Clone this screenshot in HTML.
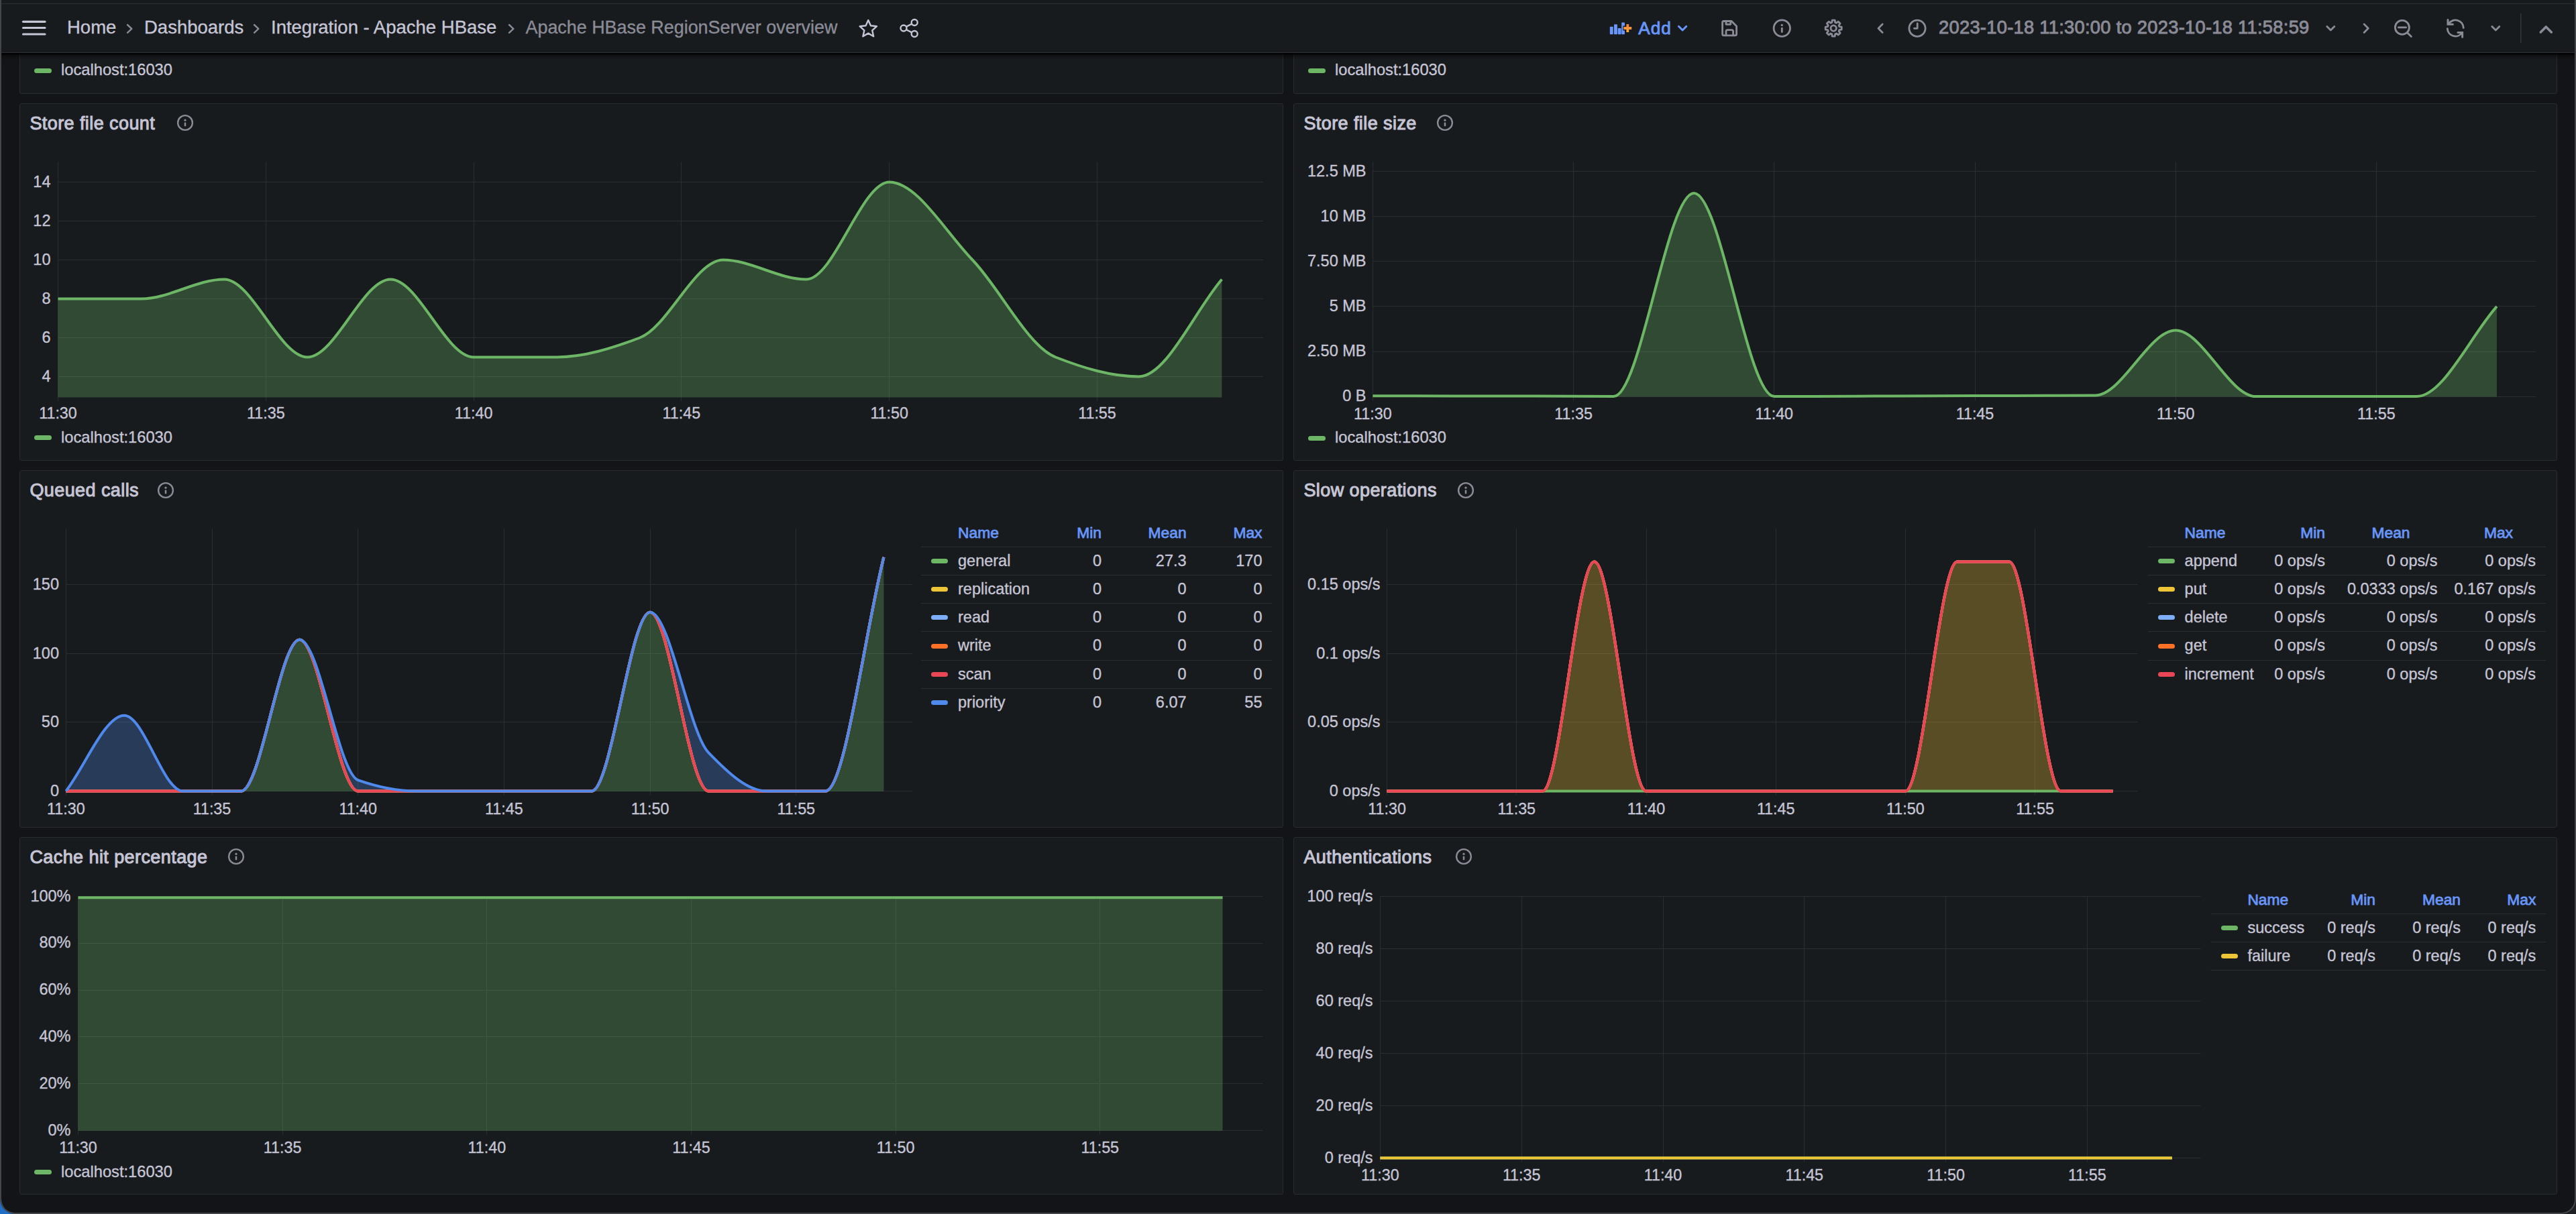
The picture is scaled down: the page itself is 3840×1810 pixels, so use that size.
<!DOCTYPE html><html><head><meta charset="utf-8"><style>
html,body{margin:0;padding:0;width:3840px;height:1810px;overflow:hidden;background:#1f2023;font-family:"Liberation Sans", sans-serif}
.a{position:absolute}
.t{position:absolute;white-space:pre;-webkit-text-stroke-width:0.35px}
.p{position:absolute;background:#181b1e;border:1px solid #292b30;border-radius:3px}
</style></head><body>
<div class="a" style="left:0;top:1770px;width:40px;height:40px;background:#1f6fc9"></div>
<div class="a" style="left:2px;top:0;width:3836px;height:1808px;background:#131417;border-radius:0 0 20px 20px;overflow:hidden" id="win">
</div>
<div class="a" style="left:0;top:0;width:3840px;height:1810px;box-sizing:border-box;border:2px solid #444548;border-top:none;border-radius:0 0 22px 22px;pointer-events:none"></div>
<div class="p" style="left:29px;top:-393px;width:1882px;height:531px"></div>
<div class="p" style="left:1928px;top:-393px;width:1882px;height:531px"></div>
<div class="p" style="left:29px;top:154px;width:1882px;height:531px"></div>
<div class="p" style="left:1928px;top:154px;width:1882px;height:531px"></div>
<div class="p" style="left:29px;top:701px;width:1882px;height:531px"></div>
<div class="p" style="left:1928px;top:701px;width:1882px;height:531px"></div>
<div class="p" style="left:29px;top:1248px;width:1882px;height:531px"></div>
<div class="p" style="left:1928px;top:1248px;width:1882px;height:531px"></div>
<div class="a" style="left:51px;top:102.3px;width:26px;height:7px;border-radius:3.5px;background:#6cb666"></div>
<div class="t" style="left:91.0px;top:93.4px;font-size:23.7px;line-height:23.7px;color:#c6c5d5;font-weight:400;">localhost:16030</div>
<div class="a" style="left:1950px;top:102.3px;width:26px;height:7px;border-radius:3.5px;background:#6cb666"></div>
<div class="t" style="left:1990.0px;top:93.4px;font-size:23.7px;line-height:23.7px;color:#c6c5d5;font-weight:400;">localhost:16030</div>
<div class="t" style="left:44.4px;top:171.0px;font-size:27px;line-height:27px;color:#c6c5d5;font-weight:400;letter-spacing:0.42px;-webkit-text-stroke:1px #c6c5d5">Store file count</div>
<svg class="a" style="left:260.5px;top:168px" width="30" height="30" viewBox="0 0 30 30"><circle cx="15" cy="15" r="10.9" fill="none" stroke="#8b8b97" stroke-width="2.4"/><circle cx="15" cy="11.2" r="1.6" fill="#8b8b97"/><rect x="13.75" y="14.4" width="2.5" height="5.8" rx="0.6" fill="#8b8b97"/></svg>
<svg class="a" style="left:0;top:0" width="3840" height="1810"><line x1="86.5" y1="271.5" x2="1883" y2="271.5" stroke="#2b2e31" stroke-width="1"/><line x1="86.5" y1="329.5" x2="1883" y2="329.5" stroke="#2b2e31" stroke-width="1"/><line x1="86.5" y1="387.5" x2="1883" y2="387.5" stroke="#2b2e31" stroke-width="1"/><line x1="86.5" y1="445.5" x2="1883" y2="445.5" stroke="#2b2e31" stroke-width="1"/><line x1="86.5" y1="503.5" x2="1883" y2="503.5" stroke="#2b2e31" stroke-width="1"/><line x1="86.5" y1="561.5" x2="1883" y2="561.5" stroke="#2b2e31" stroke-width="1"/><line x1="86.5" y1="241.5" x2="86.5" y2="598.4" stroke="#2b2e31" stroke-width="1"/><line x1="396.5" y1="241.5" x2="396.5" y2="598.4" stroke="#2b2e31" stroke-width="1"/><line x1="706.5" y1="241.5" x2="706.5" y2="598.4" stroke="#2b2e31" stroke-width="1"/><line x1="1015.5" y1="241.5" x2="1015.5" y2="598.4" stroke="#2b2e31" stroke-width="1"/><line x1="1325.5" y1="241.5" x2="1325.5" y2="598.4" stroke="#2b2e31" stroke-width="1"/><line x1="1635.5" y1="241.5" x2="1635.5" y2="598.4" stroke="#2b2e31" stroke-width="1"/><path d="M86.50,445.50C127.81,445.50 169.11,445.50 210.42,445.50C251.73,445.50 293.03,416.50 334.34,416.50C375.65,416.50 416.95,532.50 458.26,532.50C499.57,532.50 540.87,416.50 582.18,416.50C623.49,416.50 664.79,532.50 706.10,532.50C747.41,532.50 788.71,532.50 830.02,532.50C871.33,532.50 912.63,518.97 953.94,503.50C995.25,488.03 1036.55,387.50 1077.86,387.50C1119.17,387.50 1160.47,416.50 1201.78,416.50C1243.09,416.50 1284.39,271.50 1325.70,271.50C1367.01,271.50 1408.31,344.54 1449.62,387.50C1490.93,430.46 1532.23,516.39 1573.54,532.50C1614.85,548.61 1656.15,561.50 1697.46,561.50C1738.77,561.50 1780.07,464.83 1821.38,416.50L1821.38,592.40L86.50,592.40Z" fill="rgba(108,182,102,0.31)" stroke="none"/><path d="M86.50,445.50C127.81,445.50 169.11,445.50 210.42,445.50C251.73,445.50 293.03,416.50 334.34,416.50C375.65,416.50 416.95,532.50 458.26,532.50C499.57,532.50 540.87,416.50 582.18,416.50C623.49,416.50 664.79,532.50 706.10,532.50C747.41,532.50 788.71,532.50 830.02,532.50C871.33,532.50 912.63,518.97 953.94,503.50C995.25,488.03 1036.55,387.50 1077.86,387.50C1119.17,387.50 1160.47,416.50 1201.78,416.50C1243.09,416.50 1284.39,271.50 1325.70,271.50C1367.01,271.50 1408.31,344.54 1449.62,387.50C1490.93,430.46 1532.23,516.39 1573.54,532.50C1614.85,548.61 1656.15,561.50 1697.46,561.50C1738.77,561.50 1780.07,464.83 1821.38,416.50" fill="none" stroke="#6cb666" stroke-width="4" stroke-linejoin="round" stroke-linecap="butt"/></svg>
<div class="t" style="left:-1424.5px;width:1500px;text-align:right;top:259.7px;font-size:23.5px;line-height:23.5px;color:#c6c5d5;font-weight:400;">14</div>
<div class="t" style="left:-1424.5px;width:1500px;text-align:right;top:317.7px;font-size:23.5px;line-height:23.5px;color:#c6c5d5;font-weight:400;">12</div>
<div class="t" style="left:-1424.5px;width:1500px;text-align:right;top:375.7px;font-size:23.5px;line-height:23.5px;color:#c6c5d5;font-weight:400;">10</div>
<div class="t" style="left:-1424.5px;width:1500px;text-align:right;top:433.7px;font-size:23.5px;line-height:23.5px;color:#c6c5d5;font-weight:400;">8</div>
<div class="t" style="left:-1424.5px;width:1500px;text-align:right;top:491.7px;font-size:23.5px;line-height:23.5px;color:#c6c5d5;font-weight:400;">6</div>
<div class="t" style="left:-1424.5px;width:1500px;text-align:right;top:549.7px;font-size:23.5px;line-height:23.5px;color:#c6c5d5;font-weight:400;">4</div>
<div class="t" style="left:-663.5px;width:1500px;text-align:center;top:605.4px;font-size:23.3px;line-height:23.3px;color:#c6c5d5;font-weight:400;">11:30</div>
<div class="t" style="left:-353.7px;width:1500px;text-align:center;top:605.4px;font-size:23.3px;line-height:23.3px;color:#c6c5d5;font-weight:400;">11:35</div>
<div class="t" style="left:-43.9px;width:1500px;text-align:center;top:605.4px;font-size:23.3px;line-height:23.3px;color:#c6c5d5;font-weight:400;">11:40</div>
<div class="t" style="left:265.9px;width:1500px;text-align:center;top:605.4px;font-size:23.3px;line-height:23.3px;color:#c6c5d5;font-weight:400;">11:45</div>
<div class="t" style="left:575.7px;width:1500px;text-align:center;top:605.4px;font-size:23.3px;line-height:23.3px;color:#c6c5d5;font-weight:400;">11:50</div>
<div class="t" style="left:885.5px;width:1500px;text-align:center;top:605.4px;font-size:23.3px;line-height:23.3px;color:#c6c5d5;font-weight:400;">11:55</div>
<div class="a" style="left:51px;top:649.4px;width:26px;height:7px;border-radius:3.5px;background:#6cb666"></div>
<div class="t" style="left:91.0px;top:640.9px;font-size:23.7px;line-height:23.7px;color:#c6c5d5;font-weight:400;">localhost:16030</div>
<div class="t" style="left:1943.4px;top:171.0px;font-size:27px;line-height:27px;color:#c6c5d5;font-weight:400;letter-spacing:0.42px;-webkit-text-stroke:1px #c6c5d5">Store file size</div>
<svg class="a" style="left:2138.5px;top:168.4px" width="30" height="30" viewBox="0 0 30 30"><circle cx="15" cy="15" r="10.9" fill="none" stroke="#8b8b97" stroke-width="2.4"/><circle cx="15" cy="11.2" r="1.6" fill="#8b8b97"/><rect x="13.75" y="14.4" width="2.5" height="5.8" rx="0.6" fill="#8b8b97"/></svg>
<svg class="a" style="left:0;top:0" width="3840" height="1810"><line x1="2046.4" y1="255.5" x2="3780.5" y2="255.5" stroke="#2b2e31" stroke-width="1"/><line x1="2046.4" y1="322.5" x2="3780.5" y2="322.5" stroke="#2b2e31" stroke-width="1"/><line x1="2046.4" y1="389.5" x2="3780.5" y2="389.5" stroke="#2b2e31" stroke-width="1"/><line x1="2046.4" y1="456.5" x2="3780.5" y2="456.5" stroke="#2b2e31" stroke-width="1"/><line x1="2046.4" y1="524.5" x2="3780.5" y2="524.5" stroke="#2b2e31" stroke-width="1"/><line x1="2046.4" y1="591.5" x2="3780.5" y2="591.5" stroke="#2b2e31" stroke-width="1"/><line x1="2046.5" y1="241.5" x2="2046.5" y2="597.5" stroke="#2b2e31" stroke-width="1"/><line x1="2345.5" y1="241.5" x2="2345.5" y2="597.5" stroke="#2b2e31" stroke-width="1"/><line x1="2644.5" y1="241.5" x2="2644.5" y2="597.5" stroke="#2b2e31" stroke-width="1"/><line x1="2944.5" y1="241.5" x2="2944.5" y2="597.5" stroke="#2b2e31" stroke-width="1"/><line x1="3243.5" y1="241.5" x2="3243.5" y2="597.5" stroke="#2b2e31" stroke-width="1"/><line x1="3542.5" y1="241.5" x2="3542.5" y2="597.5" stroke="#2b2e31" stroke-width="1"/><path d="M2046.40,590.29C2086.29,590.32 2126.19,590.34 2166.08,590.38C2205.97,590.41 2245.87,590.47 2285.76,590.56C2325.65,590.66 2365.55,591.10 2405.44,591.10C2445.33,591.10 2485.23,288.08 2525.12,288.08C2565.01,288.08 2604.91,591.10 2644.80,591.10C2684.69,591.10 2724.59,590.83 2764.48,590.70C2804.37,590.56 2844.27,590.43 2884.16,590.29C2924.05,590.16 2963.95,590.03 3003.84,589.89C3043.73,589.76 3083.63,589.76 3123.52,589.49C3163.41,589.22 3203.31,492.60 3243.20,492.60C3283.09,492.60 3322.99,591.10 3362.88,591.10C3402.77,591.10 3442.67,591.10 3482.56,591.10C3522.45,591.10 3562.35,591.10 3602.24,591.10C3642.13,591.10 3682.03,501.63 3721.92,456.90L3721.92,591.50L2046.40,591.50Z" fill="rgba(108,182,102,0.31)" stroke="none"/><path d="M2046.40,590.29C2086.29,590.32 2126.19,590.34 2166.08,590.38C2205.97,590.41 2245.87,590.47 2285.76,590.56C2325.65,590.66 2365.55,591.10 2405.44,591.10C2445.33,591.10 2485.23,288.08 2525.12,288.08C2565.01,288.08 2604.91,591.10 2644.80,591.10C2684.69,591.10 2724.59,590.83 2764.48,590.70C2804.37,590.56 2844.27,590.43 2884.16,590.29C2924.05,590.16 2963.95,590.03 3003.84,589.89C3043.73,589.76 3083.63,589.76 3123.52,589.49C3163.41,589.22 3203.31,492.60 3243.20,492.60C3283.09,492.60 3322.99,591.10 3362.88,591.10C3402.77,591.10 3442.67,591.10 3482.56,591.10C3522.45,591.10 3562.35,591.10 3602.24,591.10C3642.13,591.10 3682.03,501.63 3721.92,456.90" fill="none" stroke="#6cb666" stroke-width="4" stroke-linejoin="round" stroke-linecap="butt"/></svg>
<div class="t" style="left:536.5px;width:1500px;text-align:right;top:243.8px;font-size:23.5px;line-height:23.5px;color:#c6c5d5;font-weight:400;">12.5 MB</div>
<div class="t" style="left:536.5px;width:1500px;text-align:right;top:310.9px;font-size:23.5px;line-height:23.5px;color:#c6c5d5;font-weight:400;">10 MB</div>
<div class="t" style="left:536.5px;width:1500px;text-align:right;top:378.0px;font-size:23.5px;line-height:23.5px;color:#c6c5d5;font-weight:400;">7.50 MB</div>
<div class="t" style="left:536.5px;width:1500px;text-align:right;top:445.1px;font-size:23.5px;line-height:23.5px;color:#c6c5d5;font-weight:400;">5 MB</div>
<div class="t" style="left:536.5px;width:1500px;text-align:right;top:512.2px;font-size:23.5px;line-height:23.5px;color:#c6c5d5;font-weight:400;">2.50 MB</div>
<div class="t" style="left:536.5px;width:1500px;text-align:right;top:579.3px;font-size:23.5px;line-height:23.5px;color:#c6c5d5;font-weight:400;">0 B</div>
<div class="t" style="left:1296.4px;width:1500px;text-align:center;top:606.0px;font-size:23.3px;line-height:23.3px;color:#c6c5d5;font-weight:400;">11:30</div>
<div class="t" style="left:1595.6px;width:1500px;text-align:center;top:606.0px;font-size:23.3px;line-height:23.3px;color:#c6c5d5;font-weight:400;">11:35</div>
<div class="t" style="left:1894.8px;width:1500px;text-align:center;top:606.0px;font-size:23.3px;line-height:23.3px;color:#c6c5d5;font-weight:400;">11:40</div>
<div class="t" style="left:2194.0px;width:1500px;text-align:center;top:606.0px;font-size:23.3px;line-height:23.3px;color:#c6c5d5;font-weight:400;">11:45</div>
<div class="t" style="left:2493.2px;width:1500px;text-align:center;top:606.0px;font-size:23.3px;line-height:23.3px;color:#c6c5d5;font-weight:400;">11:50</div>
<div class="t" style="left:2792.4px;width:1500px;text-align:center;top:606.0px;font-size:23.3px;line-height:23.3px;color:#c6c5d5;font-weight:400;">11:55</div>
<div class="a" style="left:1950px;top:649.5px;width:26px;height:7px;border-radius:3.5px;background:#6cb666"></div>
<div class="t" style="left:1990.0px;top:640.9px;font-size:23.7px;line-height:23.7px;color:#c6c5d5;font-weight:400;">localhost:16030</div>
<div class="t" style="left:44.4px;top:717.9px;font-size:27px;line-height:27px;color:#c6c5d5;font-weight:400;letter-spacing:0.42px;-webkit-text-stroke:1px #c6c5d5">Queued calls</div>
<svg class="a" style="left:231.5px;top:715.6px" width="30" height="30" viewBox="0 0 30 30"><circle cx="15" cy="15" r="10.9" fill="none" stroke="#8b8b97" stroke-width="2.4"/><circle cx="15" cy="11.2" r="1.6" fill="#8b8b97"/><rect x="13.75" y="14.4" width="2.5" height="5.8" rx="0.6" fill="#8b8b97"/></svg>
<svg class="a" style="left:0;top:0" width="3840" height="1810"><line x1="98.3" y1="871.5" x2="1359.6" y2="871.5" stroke="#2b2e31" stroke-width="1"/><line x1="98.3" y1="974.5" x2="1359.6" y2="974.5" stroke="#2b2e31" stroke-width="1"/><line x1="98.3" y1="1076.5" x2="1359.6" y2="1076.5" stroke="#2b2e31" stroke-width="1"/><line x1="98.3" y1="1179.5" x2="1359.6" y2="1179.5" stroke="#2b2e31" stroke-width="1"/><line x1="98.5" y1="788.3" x2="98.5" y2="1185.8" stroke="#2b2e31" stroke-width="1"/><line x1="316.5" y1="788.3" x2="316.5" y2="1185.8" stroke="#2b2e31" stroke-width="1"/><line x1="533.5" y1="788.3" x2="533.5" y2="1185.8" stroke="#2b2e31" stroke-width="1"/><line x1="751.5" y1="788.3" x2="751.5" y2="1185.8" stroke="#2b2e31" stroke-width="1"/><line x1="969.5" y1="788.3" x2="969.5" y2="1185.8" stroke="#2b2e31" stroke-width="1"/><line x1="1186.5" y1="788.3" x2="1186.5" y2="1185.8" stroke="#2b2e31" stroke-width="1"/><path d="M98.30,1179.50C127.33,1179.50 156.35,1179.50 185.38,1179.50C214.41,1179.50 243.43,1179.50 272.46,1179.50C301.49,1179.50 330.51,1179.50 359.54,1179.50C388.57,1179.50 417.59,953.78 446.62,953.78C475.65,953.78 504.67,1179.50 533.70,1179.50C562.73,1179.50 591.75,1179.50 620.78,1179.50C649.81,1179.50 678.83,1179.50 707.86,1179.50C736.89,1179.50 765.91,1179.50 794.94,1179.50C823.97,1179.50 852.99,1179.50 882.02,1179.50C911.05,1179.50 940.07,912.74 969.10,912.74C998.13,912.74 1027.15,1179.50 1056.18,1179.50C1085.21,1179.50 1114.23,1179.50 1143.26,1179.50C1172.29,1179.50 1201.31,1179.50 1230.34,1179.50C1259.37,1179.50 1288.39,946.94 1317.42,830.66L1317.42,1179.80L98.30,1179.80Z" fill="rgba(108,182,102,0.31)" stroke="none"/><path d="M98.30,1179.50C127.33,1141.88 156.35,1066.64 185.38,1066.64C214.41,1066.64 243.43,1179.50 272.46,1179.50C301.49,1179.50 330.51,1179.50 359.54,1179.50C388.57,1179.50 417.59,953.78 446.62,953.78C475.65,953.78 504.67,1152.94 533.70,1163.08C562.73,1173.23 591.75,1179.50 620.78,1179.50C649.81,1179.50 678.83,1179.50 707.86,1179.50C736.89,1179.50 765.91,1179.50 794.94,1179.50C823.97,1179.50 852.99,1179.50 882.02,1179.50C911.05,1179.50 940.07,912.74 969.10,912.74C998.13,912.74 1027.15,1091.99 1056.18,1122.04C1085.21,1152.10 1114.23,1179.50 1143.26,1179.50C1172.29,1179.50 1201.31,1179.50 1230.34,1179.50C1259.37,1179.50 1288.39,946.94 1317.42,830.66L1317.42,830.66C1288.39,946.94 1259.37,1179.50 1230.34,1179.50C1201.31,1179.50 1172.29,1179.50 1143.26,1179.50C1114.23,1179.50 1085.21,1179.50 1056.18,1179.50C1027.15,1179.50 998.13,912.74 969.10,912.74C940.07,912.74 911.05,1179.50 882.02,1179.50C852.99,1179.50 823.97,1179.50 794.94,1179.50C765.91,1179.50 736.89,1179.50 707.86,1179.50C678.83,1179.50 649.81,1179.50 620.78,1179.50C591.75,1179.50 562.73,1179.50 533.70,1179.50C504.67,1179.50 475.65,953.78 446.62,953.78C417.59,953.78 388.57,1179.50 359.54,1179.50C330.51,1179.50 301.49,1179.50 272.46,1179.50C243.43,1179.50 214.41,1179.50 185.38,1179.50C156.35,1179.50 127.33,1179.50 98.30,1179.50Z" fill="rgba(79,137,236,0.29)" stroke="none"/><path d="M98.30,1179.50C127.33,1179.50 156.35,1179.50 185.38,1179.50C214.41,1179.50 243.43,1179.50 272.46,1179.50C301.49,1179.50 330.51,1179.50 359.54,1179.50C388.57,1179.50 417.59,953.78 446.62,953.78C475.65,953.78 504.67,1179.50 533.70,1179.50C562.73,1179.50 591.75,1179.50 620.78,1179.50C649.81,1179.50 678.83,1179.50 707.86,1179.50C736.89,1179.50 765.91,1179.50 794.94,1179.50C823.97,1179.50 852.99,1179.50 882.02,1179.50C911.05,1179.50 940.07,912.74 969.10,912.74C998.13,912.74 1027.15,1179.50 1056.18,1179.50C1085.21,1179.50 1114.23,1179.50 1143.26,1179.50C1172.29,1179.50 1201.31,1179.50 1230.34,1179.50C1259.37,1179.50 1288.39,946.94 1317.42,830.66" fill="none" stroke="#6cb666" stroke-width="4" stroke-linejoin="round" stroke-linecap="butt"/><path d="M98.30,1179.50C127.33,1179.50 156.35,1179.50 185.38,1179.50C214.41,1179.50 243.43,1179.50 272.46,1179.50C301.49,1179.50 330.51,1179.50 359.54,1179.50C388.57,1179.50 417.59,953.78 446.62,953.78C475.65,953.78 504.67,1179.50 533.70,1179.50C562.73,1179.50 591.75,1179.50 620.78,1179.50C649.81,1179.50 678.83,1179.50 707.86,1179.50C736.89,1179.50 765.91,1179.50 794.94,1179.50C823.97,1179.50 852.99,1179.50 882.02,1179.50C911.05,1179.50 940.07,912.74 969.10,912.74C998.13,912.74 1027.15,1179.50 1056.18,1179.50C1085.21,1179.50 1114.23,1179.50 1143.26,1179.50C1172.29,1179.50 1201.31,1179.50 1230.34,1179.50C1259.37,1179.50 1288.39,946.94 1317.42,830.66" fill="none" stroke="#eec536" stroke-width="4" stroke-linejoin="round" stroke-linecap="butt"/><path d="M98.30,1179.50C127.33,1179.50 156.35,1179.50 185.38,1179.50C214.41,1179.50 243.43,1179.50 272.46,1179.50C301.49,1179.50 330.51,1179.50 359.54,1179.50C388.57,1179.50 417.59,953.78 446.62,953.78C475.65,953.78 504.67,1179.50 533.70,1179.50C562.73,1179.50 591.75,1179.50 620.78,1179.50C649.81,1179.50 678.83,1179.50 707.86,1179.50C736.89,1179.50 765.91,1179.50 794.94,1179.50C823.97,1179.50 852.99,1179.50 882.02,1179.50C911.05,1179.50 940.07,912.74 969.10,912.74C998.13,912.74 1027.15,1179.50 1056.18,1179.50C1085.21,1179.50 1114.23,1179.50 1143.26,1179.50C1172.29,1179.50 1201.31,1179.50 1230.34,1179.50C1259.37,1179.50 1288.39,946.94 1317.42,830.66" fill="none" stroke="#7faef8" stroke-width="4" stroke-linejoin="round" stroke-linecap="butt"/><path d="M98.30,1179.50C127.33,1179.50 156.35,1179.50 185.38,1179.50C214.41,1179.50 243.43,1179.50 272.46,1179.50C301.49,1179.50 330.51,1179.50 359.54,1179.50C388.57,1179.50 417.59,953.78 446.62,953.78C475.65,953.78 504.67,1179.50 533.70,1179.50C562.73,1179.50 591.75,1179.50 620.78,1179.50C649.81,1179.50 678.83,1179.50 707.86,1179.50C736.89,1179.50 765.91,1179.50 794.94,1179.50C823.97,1179.50 852.99,1179.50 882.02,1179.50C911.05,1179.50 940.07,912.74 969.10,912.74C998.13,912.74 1027.15,1179.50 1056.18,1179.50C1085.21,1179.50 1114.23,1179.50 1143.26,1179.50C1172.29,1179.50 1201.31,1179.50 1230.34,1179.50C1259.37,1179.50 1288.39,946.94 1317.42,830.66" fill="none" stroke="#ff7127" stroke-width="4" stroke-linejoin="round" stroke-linecap="butt"/><path d="M98.30,1179.50C127.33,1179.50 156.35,1179.50 185.38,1179.50C214.41,1179.50 243.43,1179.50 272.46,1179.50C301.49,1179.50 330.51,1179.50 359.54,1179.50C388.57,1179.50 417.59,953.78 446.62,953.78C475.65,953.78 504.67,1179.50 533.70,1179.50C562.73,1179.50 591.75,1179.50 620.78,1179.50C649.81,1179.50 678.83,1179.50 707.86,1179.50C736.89,1179.50 765.91,1179.50 794.94,1179.50C823.97,1179.50 852.99,1179.50 882.02,1179.50C911.05,1179.50 940.07,912.74 969.10,912.74C998.13,912.74 1027.15,1179.50 1056.18,1179.50C1085.21,1179.50 1114.23,1179.50 1143.26,1179.50C1172.29,1179.50 1201.31,1179.50 1230.34,1179.50C1259.37,1179.50 1288.39,946.94 1317.42,830.66" fill="none" stroke="#ea4655" stroke-width="4" stroke-linejoin="round" stroke-linecap="butt"/><path d="M98.30,1179.50C127.33,1141.88 156.35,1066.64 185.38,1066.64C214.41,1066.64 243.43,1179.50 272.46,1179.50C301.49,1179.50 330.51,1179.50 359.54,1179.50C388.57,1179.50 417.59,953.78 446.62,953.78C475.65,953.78 504.67,1152.94 533.70,1163.08C562.73,1173.23 591.75,1179.50 620.78,1179.50C649.81,1179.50 678.83,1179.50 707.86,1179.50C736.89,1179.50 765.91,1179.50 794.94,1179.50C823.97,1179.50 852.99,1179.50 882.02,1179.50C911.05,1179.50 940.07,912.74 969.10,912.74C998.13,912.74 1027.15,1091.99 1056.18,1122.04C1085.21,1152.10 1114.23,1179.50 1143.26,1179.50C1172.29,1179.50 1201.31,1179.50 1230.34,1179.50C1259.37,1179.50 1288.39,946.94 1317.42,830.66" fill="none" stroke="#4f89ec" stroke-width="4" stroke-linejoin="round" stroke-linecap="butt"/></svg>
<div class="t" style="left:-1412.0px;width:1500px;text-align:right;top:859.9px;font-size:23.5px;line-height:23.5px;color:#c6c5d5;font-weight:400;">150</div>
<div class="t" style="left:-1412.0px;width:1500px;text-align:right;top:962.5px;font-size:23.5px;line-height:23.5px;color:#c6c5d5;font-weight:400;">100</div>
<div class="t" style="left:-1412.0px;width:1500px;text-align:right;top:1065.1px;font-size:23.5px;line-height:23.5px;color:#c6c5d5;font-weight:400;">50</div>
<div class="t" style="left:-1412.0px;width:1500px;text-align:right;top:1167.7px;font-size:23.5px;line-height:23.5px;color:#c6c5d5;font-weight:400;">0</div>
<div class="t" style="left:-651.7px;width:1500px;text-align:center;top:1194.5px;font-size:23.3px;line-height:23.3px;color:#c6c5d5;font-weight:400;">11:30</div>
<div class="t" style="left:-434.0px;width:1500px;text-align:center;top:1194.5px;font-size:23.3px;line-height:23.3px;color:#c6c5d5;font-weight:400;">11:35</div>
<div class="t" style="left:-216.3px;width:1500px;text-align:center;top:1194.5px;font-size:23.3px;line-height:23.3px;color:#c6c5d5;font-weight:400;">11:40</div>
<div class="t" style="left:1.4px;width:1500px;text-align:center;top:1194.5px;font-size:23.3px;line-height:23.3px;color:#c6c5d5;font-weight:400;">11:45</div>
<div class="t" style="left:219.1px;width:1500px;text-align:center;top:1194.5px;font-size:23.3px;line-height:23.3px;color:#c6c5d5;font-weight:400;">11:50</div>
<div class="t" style="left:436.8px;width:1500px;text-align:center;top:1194.5px;font-size:23.3px;line-height:23.3px;color:#c6c5d5;font-weight:400;">11:55</div>
<div class="t" style="left:1428.0px;top:783.4px;font-size:22.8px;line-height:22.8px;color:#6896fa;font-weight:400;-webkit-text-stroke:0.8px #6896fa">Name</div>
<div class="t" style="left:142.0px;width:1500px;text-align:right;top:783.4px;font-size:22.8px;line-height:22.8px;color:#6896fa;font-weight:400;-webkit-text-stroke:0.8px #6896fa">Min</div>
<div class="t" style="left:268.6px;width:1500px;text-align:right;top:783.4px;font-size:22.8px;line-height:22.8px;color:#6896fa;font-weight:400;-webkit-text-stroke:0.8px #6896fa">Mean</div>
<div class="t" style="left:381.5px;width:1500px;text-align:right;top:783.4px;font-size:22.8px;line-height:22.8px;color:#6896fa;font-weight:400;-webkit-text-stroke:0.8px #6896fa">Max</div>
<svg class="a" style="left:0;top:0" width="3840" height="1810"><line x1="1373" y1="815.5" x2="1896" y2="815.5" stroke="#2b2e31" stroke-width="1"/><line x1="1373" y1="857.5" x2="1896" y2="857.5" stroke="#2b2e31" stroke-width="1"/><line x1="1373" y1="899.5" x2="1896" y2="899.5" stroke="#2b2e31" stroke-width="1"/><line x1="1373" y1="941.5" x2="1896" y2="941.5" stroke="#2b2e31" stroke-width="1"/><line x1="1373" y1="984.5" x2="1896" y2="984.5" stroke="#2b2e31" stroke-width="1"/><line x1="1373" y1="1026.5" x2="1896" y2="1026.5" stroke="#2b2e31" stroke-width="1"/></svg>
<div class="a" style="left:1388px;top:833.0px;width:25px;height:7px;border-radius:3.5px;background:#6cb666"></div>
<div class="t" style="left:1428.0px;top:824.9px;font-size:23.5px;line-height:23.5px;color:#c6c5d5;font-weight:400;">general</div>
<div class="t" style="left:142.0px;width:1500px;text-align:right;top:824.9px;font-size:23.5px;line-height:23.5px;color:#c6c5d5;font-weight:400;">0</div>
<div class="t" style="left:268.6px;width:1500px;text-align:right;top:824.9px;font-size:23.5px;line-height:23.5px;color:#c6c5d5;font-weight:400;">27.3</div>
<div class="t" style="left:381.5px;width:1500px;text-align:right;top:824.9px;font-size:23.5px;line-height:23.5px;color:#c6c5d5;font-weight:400;">170</div>
<div class="a" style="left:1388px;top:875.1px;width:25px;height:7px;border-radius:3.5px;background:#eec536"></div>
<div class="t" style="left:1428.0px;top:867.1px;font-size:23.5px;line-height:23.5px;color:#c6c5d5;font-weight:400;">replication</div>
<div class="t" style="left:142.0px;width:1500px;text-align:right;top:867.1px;font-size:23.5px;line-height:23.5px;color:#c6c5d5;font-weight:400;">0</div>
<div class="t" style="left:268.6px;width:1500px;text-align:right;top:867.1px;font-size:23.5px;line-height:23.5px;color:#c6c5d5;font-weight:400;">0</div>
<div class="t" style="left:381.5px;width:1500px;text-align:right;top:867.1px;font-size:23.5px;line-height:23.5px;color:#c6c5d5;font-weight:400;">0</div>
<div class="a" style="left:1388px;top:917.3px;width:25px;height:7px;border-radius:3.5px;background:#7faef8"></div>
<div class="t" style="left:1428.0px;top:909.2px;font-size:23.5px;line-height:23.5px;color:#c6c5d5;font-weight:400;">read</div>
<div class="t" style="left:142.0px;width:1500px;text-align:right;top:909.2px;font-size:23.5px;line-height:23.5px;color:#c6c5d5;font-weight:400;">0</div>
<div class="t" style="left:268.6px;width:1500px;text-align:right;top:909.2px;font-size:23.5px;line-height:23.5px;color:#c6c5d5;font-weight:400;">0</div>
<div class="t" style="left:381.5px;width:1500px;text-align:right;top:909.2px;font-size:23.5px;line-height:23.5px;color:#c6c5d5;font-weight:400;">0</div>
<div class="a" style="left:1388px;top:959.5px;width:25px;height:7px;border-radius:3.5px;background:#ff7127"></div>
<div class="t" style="left:1428.0px;top:951.4px;font-size:23.5px;line-height:23.5px;color:#c6c5d5;font-weight:400;">write</div>
<div class="t" style="left:142.0px;width:1500px;text-align:right;top:951.4px;font-size:23.5px;line-height:23.5px;color:#c6c5d5;font-weight:400;">0</div>
<div class="t" style="left:268.6px;width:1500px;text-align:right;top:951.4px;font-size:23.5px;line-height:23.5px;color:#c6c5d5;font-weight:400;">0</div>
<div class="t" style="left:381.5px;width:1500px;text-align:right;top:951.4px;font-size:23.5px;line-height:23.5px;color:#c6c5d5;font-weight:400;">0</div>
<div class="a" style="left:1388px;top:1001.6px;width:25px;height:7px;border-radius:3.5px;background:#ea4655"></div>
<div class="t" style="left:1428.0px;top:993.5px;font-size:23.5px;line-height:23.5px;color:#c6c5d5;font-weight:400;">scan</div>
<div class="t" style="left:142.0px;width:1500px;text-align:right;top:993.5px;font-size:23.5px;line-height:23.5px;color:#c6c5d5;font-weight:400;">0</div>
<div class="t" style="left:268.6px;width:1500px;text-align:right;top:993.5px;font-size:23.5px;line-height:23.5px;color:#c6c5d5;font-weight:400;">0</div>
<div class="t" style="left:381.5px;width:1500px;text-align:right;top:993.5px;font-size:23.5px;line-height:23.5px;color:#c6c5d5;font-weight:400;">0</div>
<div class="a" style="left:1388px;top:1043.8px;width:25px;height:7px;border-radius:3.5px;background:#4f89ec"></div>
<div class="t" style="left:1428.0px;top:1035.7px;font-size:23.5px;line-height:23.5px;color:#c6c5d5;font-weight:400;">priority</div>
<div class="t" style="left:142.0px;width:1500px;text-align:right;top:1035.7px;font-size:23.5px;line-height:23.5px;color:#c6c5d5;font-weight:400;">0</div>
<div class="t" style="left:268.6px;width:1500px;text-align:right;top:1035.7px;font-size:23.5px;line-height:23.5px;color:#c6c5d5;font-weight:400;">6.07</div>
<div class="t" style="left:381.5px;width:1500px;text-align:right;top:1035.7px;font-size:23.5px;line-height:23.5px;color:#c6c5d5;font-weight:400;">55</div>
<div class="t" style="left:1943.4px;top:717.9px;font-size:27px;line-height:27px;color:#c6c5d5;font-weight:400;letter-spacing:0.42px;-webkit-text-stroke:1px #c6c5d5">Slow operations</div>
<svg class="a" style="left:2169.5px;top:715.6px" width="30" height="30" viewBox="0 0 30 30"><circle cx="15" cy="15" r="10.9" fill="none" stroke="#8b8b97" stroke-width="2.4"/><circle cx="15" cy="11.2" r="1.6" fill="#8b8b97"/><rect x="13.75" y="14.4" width="2.5" height="5.8" rx="0.6" fill="#8b8b97"/></svg>
<svg class="a" style="left:0;top:0" width="3840" height="1810"><line x1="2067.6" y1="871.5" x2="3186.7" y2="871.5" stroke="#2b2e31" stroke-width="1"/><line x1="2067.6" y1="974.5" x2="3186.7" y2="974.5" stroke="#2b2e31" stroke-width="1"/><line x1="2067.6" y1="1076.5" x2="3186.7" y2="1076.5" stroke="#2b2e31" stroke-width="1"/><line x1="2067.6" y1="1179.5" x2="3186.7" y2="1179.5" stroke="#2b2e31" stroke-width="1"/><line x1="2067.5" y1="788.3" x2="2067.5" y2="1185.8" stroke="#2b2e31" stroke-width="1"/><line x1="2260.5" y1="788.3" x2="2260.5" y2="1185.8" stroke="#2b2e31" stroke-width="1"/><line x1="2454.5" y1="788.3" x2="2454.5" y2="1185.8" stroke="#2b2e31" stroke-width="1"/><line x1="2647.5" y1="788.3" x2="2647.5" y2="1185.8" stroke="#2b2e31" stroke-width="1"/><line x1="2840.5" y1="788.3" x2="2840.5" y2="1185.8" stroke="#2b2e31" stroke-width="1"/><line x1="3033.5" y1="788.3" x2="3033.5" y2="1185.8" stroke="#2b2e31" stroke-width="1"/><path d="M2067.60,1179.50C2093.36,1179.50 2119.12,1179.50 2144.88,1179.50C2170.64,1179.50 2196.40,1179.50 2222.16,1179.50C2247.92,1179.50 2273.68,1179.50 2299.44,1179.50C2325.20,1179.50 2350.96,837.43 2376.72,837.43C2402.48,837.43 2428.24,1179.50 2454.00,1179.50C2479.76,1179.50 2505.52,1179.50 2531.28,1179.50C2557.04,1179.50 2582.80,1179.50 2608.56,1179.50C2634.32,1179.50 2660.08,1179.50 2685.84,1179.50C2711.60,1179.50 2737.36,1179.50 2763.12,1179.50C2788.88,1179.50 2814.64,1179.50 2840.40,1179.50C2866.16,1179.50 2891.92,837.43 2917.68,837.43C2943.44,837.43 2969.20,837.43 2994.96,837.43C3020.72,837.43 3046.48,1179.50 3072.24,1179.50C3098.00,1179.50 3123.76,1179.50 3149.52,1179.50L3149.52,1179.50C3123.76,1179.50 3098.00,1179.50 3072.24,1179.50C3046.48,1179.50 3020.72,1179.50 2994.96,1179.50C2969.20,1179.50 2943.44,1179.50 2917.68,1179.50C2891.92,1179.50 2866.16,1179.50 2840.40,1179.50C2814.64,1179.50 2788.88,1179.50 2763.12,1179.50C2737.36,1179.50 2711.60,1179.50 2685.84,1179.50C2660.08,1179.50 2634.32,1179.50 2608.56,1179.50C2582.80,1179.50 2557.04,1179.50 2531.28,1179.50C2505.52,1179.50 2479.76,1179.50 2454.00,1179.50C2428.24,1179.50 2402.48,1179.50 2376.72,1179.50C2350.96,1179.50 2325.20,1179.50 2299.44,1179.50C2273.68,1179.50 2247.92,1179.50 2222.16,1179.50C2196.40,1179.50 2170.64,1179.50 2144.88,1179.50C2119.12,1179.50 2093.36,1179.50 2067.60,1179.50Z" fill="rgba(238,197,54,0.3)" stroke="none"/><path d="M2067.60,1179.50C2093.36,1179.50 2119.12,1179.50 2144.88,1179.50C2170.64,1179.50 2196.40,1179.50 2222.16,1179.50C2247.92,1179.50 2273.68,1179.50 2299.44,1179.50C2325.20,1179.50 2350.96,1179.50 2376.72,1179.50C2402.48,1179.50 2428.24,1179.50 2454.00,1179.50C2479.76,1179.50 2505.52,1179.50 2531.28,1179.50C2557.04,1179.50 2582.80,1179.50 2608.56,1179.50C2634.32,1179.50 2660.08,1179.50 2685.84,1179.50C2711.60,1179.50 2737.36,1179.50 2763.12,1179.50C2788.88,1179.50 2814.64,1179.50 2840.40,1179.50C2866.16,1179.50 2891.92,1179.50 2917.68,1179.50C2943.44,1179.50 2969.20,1179.50 2994.96,1179.50C3020.72,1179.50 3046.48,1179.50 3072.24,1179.50C3098.00,1179.50 3123.76,1179.50 3149.52,1179.50" fill="none" stroke="#6cb666" stroke-width="4" stroke-linejoin="round" stroke-linecap="butt"/><path d="M2067.60,1179.50C2093.36,1179.50 2119.12,1179.50 2144.88,1179.50C2170.64,1179.50 2196.40,1179.50 2222.16,1179.50C2247.92,1179.50 2273.68,1179.50 2299.44,1179.50C2325.20,1179.50 2350.96,837.43 2376.72,837.43C2402.48,837.43 2428.24,1179.50 2454.00,1179.50C2479.76,1179.50 2505.52,1179.50 2531.28,1179.50C2557.04,1179.50 2582.80,1179.50 2608.56,1179.50C2634.32,1179.50 2660.08,1179.50 2685.84,1179.50C2711.60,1179.50 2737.36,1179.50 2763.12,1179.50C2788.88,1179.50 2814.64,1179.50 2840.40,1179.50C2866.16,1179.50 2891.92,837.43 2917.68,837.43C2943.44,837.43 2969.20,837.43 2994.96,837.43C3020.72,837.43 3046.48,1179.50 3072.24,1179.50C3098.00,1179.50 3123.76,1179.50 3149.52,1179.50" fill="none" stroke="#eec536" stroke-width="4" stroke-linejoin="round" stroke-linecap="butt"/><path d="M2067.60,1179.50C2093.36,1179.50 2119.12,1179.50 2144.88,1179.50C2170.64,1179.50 2196.40,1179.50 2222.16,1179.50C2247.92,1179.50 2273.68,1179.50 2299.44,1179.50C2325.20,1179.50 2350.96,837.43 2376.72,837.43C2402.48,837.43 2428.24,1179.50 2454.00,1179.50C2479.76,1179.50 2505.52,1179.50 2531.28,1179.50C2557.04,1179.50 2582.80,1179.50 2608.56,1179.50C2634.32,1179.50 2660.08,1179.50 2685.84,1179.50C2711.60,1179.50 2737.36,1179.50 2763.12,1179.50C2788.88,1179.50 2814.64,1179.50 2840.40,1179.50C2866.16,1179.50 2891.92,837.43 2917.68,837.43C2943.44,837.43 2969.20,837.43 2994.96,837.43C3020.72,837.43 3046.48,1179.50 3072.24,1179.50C3098.00,1179.50 3123.76,1179.50 3149.52,1179.50" fill="none" stroke="#7faef8" stroke-width="4" stroke-linejoin="round" stroke-linecap="butt"/><path d="M2067.60,1179.50C2093.36,1179.50 2119.12,1179.50 2144.88,1179.50C2170.64,1179.50 2196.40,1179.50 2222.16,1179.50C2247.92,1179.50 2273.68,1179.50 2299.44,1179.50C2325.20,1179.50 2350.96,837.43 2376.72,837.43C2402.48,837.43 2428.24,1179.50 2454.00,1179.50C2479.76,1179.50 2505.52,1179.50 2531.28,1179.50C2557.04,1179.50 2582.80,1179.50 2608.56,1179.50C2634.32,1179.50 2660.08,1179.50 2685.84,1179.50C2711.60,1179.50 2737.36,1179.50 2763.12,1179.50C2788.88,1179.50 2814.64,1179.50 2840.40,1179.50C2866.16,1179.50 2891.92,837.43 2917.68,837.43C2943.44,837.43 2969.20,837.43 2994.96,837.43C3020.72,837.43 3046.48,1179.50 3072.24,1179.50C3098.00,1179.50 3123.76,1179.50 3149.52,1179.50" fill="none" stroke="#ff7127" stroke-width="4" stroke-linejoin="round" stroke-linecap="butt"/><path d="M2067.60,1179.50C2093.36,1179.50 2119.12,1179.50 2144.88,1179.50C2170.64,1179.50 2196.40,1179.50 2222.16,1179.50C2247.92,1179.50 2273.68,1179.50 2299.44,1179.50C2325.20,1179.50 2350.96,837.43 2376.72,837.43C2402.48,837.43 2428.24,1179.50 2454.00,1179.50C2479.76,1179.50 2505.52,1179.50 2531.28,1179.50C2557.04,1179.50 2582.80,1179.50 2608.56,1179.50C2634.32,1179.50 2660.08,1179.50 2685.84,1179.50C2711.60,1179.50 2737.36,1179.50 2763.12,1179.50C2788.88,1179.50 2814.64,1179.50 2840.40,1179.50C2866.16,1179.50 2891.92,837.43 2917.68,837.43C2943.44,837.43 2969.20,837.43 2994.96,837.43C3020.72,837.43 3046.48,1179.50 3072.24,1179.50C3098.00,1179.50 3123.76,1179.50 3149.52,1179.50" fill="none" stroke="#ea4655" stroke-width="4" stroke-linejoin="round" stroke-linecap="butt"/></svg>
<div class="t" style="left:557.5px;width:1500px;text-align:right;top:859.9px;font-size:23.5px;line-height:23.5px;color:#c6c5d5;font-weight:400;">0.15 ops/s</div>
<div class="t" style="left:557.5px;width:1500px;text-align:right;top:962.5px;font-size:23.5px;line-height:23.5px;color:#c6c5d5;font-weight:400;">0.1 ops/s</div>
<div class="t" style="left:557.5px;width:1500px;text-align:right;top:1065.1px;font-size:23.5px;line-height:23.5px;color:#c6c5d5;font-weight:400;">0.05 ops/s</div>
<div class="t" style="left:557.5px;width:1500px;text-align:right;top:1167.7px;font-size:23.5px;line-height:23.5px;color:#c6c5d5;font-weight:400;">0 ops/s</div>
<div class="t" style="left:1317.6px;width:1500px;text-align:center;top:1194.5px;font-size:23.3px;line-height:23.3px;color:#c6c5d5;font-weight:400;">11:30</div>
<div class="t" style="left:1510.8px;width:1500px;text-align:center;top:1194.5px;font-size:23.3px;line-height:23.3px;color:#c6c5d5;font-weight:400;">11:35</div>
<div class="t" style="left:1704.0px;width:1500px;text-align:center;top:1194.5px;font-size:23.3px;line-height:23.3px;color:#c6c5d5;font-weight:400;">11:40</div>
<div class="t" style="left:1897.2px;width:1500px;text-align:center;top:1194.5px;font-size:23.3px;line-height:23.3px;color:#c6c5d5;font-weight:400;">11:45</div>
<div class="t" style="left:2090.4px;width:1500px;text-align:center;top:1194.5px;font-size:23.3px;line-height:23.3px;color:#c6c5d5;font-weight:400;">11:50</div>
<div class="t" style="left:2283.6px;width:1500px;text-align:center;top:1194.5px;font-size:23.3px;line-height:23.3px;color:#c6c5d5;font-weight:400;">11:55</div>
<div class="t" style="left:3256.6px;top:783.4px;font-size:22.8px;line-height:22.8px;color:#6896fa;font-weight:400;-webkit-text-stroke:0.8px #6896fa">Name</div>
<div class="t" style="left:1966.0px;width:1500px;text-align:right;top:783.4px;font-size:22.8px;line-height:22.8px;color:#6896fa;font-weight:400;-webkit-text-stroke:0.8px #6896fa">Min</div>
<div class="t" style="left:2092.5px;width:1500px;text-align:right;top:783.4px;font-size:22.8px;line-height:22.8px;color:#6896fa;font-weight:400;-webkit-text-stroke:0.8px #6896fa">Mean</div>
<div class="t" style="left:2246.0px;width:1500px;text-align:right;top:783.4px;font-size:22.8px;line-height:22.8px;color:#6896fa;font-weight:400;-webkit-text-stroke:0.8px #6896fa">Max</div>
<svg class="a" style="left:0;top:0" width="3840" height="1810"><line x1="3202" y1="815.5" x2="3795" y2="815.5" stroke="#2b2e31" stroke-width="1"/><line x1="3202" y1="857.5" x2="3795" y2="857.5" stroke="#2b2e31" stroke-width="1"/><line x1="3202" y1="899.5" x2="3795" y2="899.5" stroke="#2b2e31" stroke-width="1"/><line x1="3202" y1="941.5" x2="3795" y2="941.5" stroke="#2b2e31" stroke-width="1"/><line x1="3202" y1="984.5" x2="3795" y2="984.5" stroke="#2b2e31" stroke-width="1"/></svg>
<div class="a" style="left:3217px;top:833.0px;width:25px;height:7px;border-radius:3.5px;background:#6cb666"></div>
<div class="t" style="left:3256.6px;top:824.9px;font-size:23.5px;line-height:23.5px;color:#c6c5d5;font-weight:400;">append</div>
<div class="t" style="left:1966.0px;width:1500px;text-align:right;top:824.9px;font-size:23.5px;line-height:23.5px;color:#c6c5d5;font-weight:400;">0 ops/s</div>
<div class="t" style="left:2133.5px;width:1500px;text-align:right;top:824.9px;font-size:23.5px;line-height:23.5px;color:#c6c5d5;font-weight:400;">0 ops/s</div>
<div class="t" style="left:2280.0px;width:1500px;text-align:right;top:824.9px;font-size:23.5px;line-height:23.5px;color:#c6c5d5;font-weight:400;">0 ops/s</div>
<div class="a" style="left:3217px;top:875.1px;width:25px;height:7px;border-radius:3.5px;background:#eec536"></div>
<div class="t" style="left:3256.6px;top:867.1px;font-size:23.5px;line-height:23.5px;color:#c6c5d5;font-weight:400;">put</div>
<div class="t" style="left:1966.0px;width:1500px;text-align:right;top:867.1px;font-size:23.5px;line-height:23.5px;color:#c6c5d5;font-weight:400;">0 ops/s</div>
<div class="t" style="left:2133.5px;width:1500px;text-align:right;top:867.1px;font-size:23.5px;line-height:23.5px;color:#c6c5d5;font-weight:400;">0.0333 ops/s</div>
<div class="t" style="left:2280.0px;width:1500px;text-align:right;top:867.1px;font-size:23.5px;line-height:23.5px;color:#c6c5d5;font-weight:400;">0.167 ops/s</div>
<div class="a" style="left:3217px;top:917.3px;width:25px;height:7px;border-radius:3.5px;background:#7faef8"></div>
<div class="t" style="left:3256.6px;top:909.2px;font-size:23.5px;line-height:23.5px;color:#c6c5d5;font-weight:400;">delete</div>
<div class="t" style="left:1966.0px;width:1500px;text-align:right;top:909.2px;font-size:23.5px;line-height:23.5px;color:#c6c5d5;font-weight:400;">0 ops/s</div>
<div class="t" style="left:2133.5px;width:1500px;text-align:right;top:909.2px;font-size:23.5px;line-height:23.5px;color:#c6c5d5;font-weight:400;">0 ops/s</div>
<div class="t" style="left:2280.0px;width:1500px;text-align:right;top:909.2px;font-size:23.5px;line-height:23.5px;color:#c6c5d5;font-weight:400;">0 ops/s</div>
<div class="a" style="left:3217px;top:959.5px;width:25px;height:7px;border-radius:3.5px;background:#ff7127"></div>
<div class="t" style="left:3256.6px;top:951.4px;font-size:23.5px;line-height:23.5px;color:#c6c5d5;font-weight:400;">get</div>
<div class="t" style="left:1966.0px;width:1500px;text-align:right;top:951.4px;font-size:23.5px;line-height:23.5px;color:#c6c5d5;font-weight:400;">0 ops/s</div>
<div class="t" style="left:2133.5px;width:1500px;text-align:right;top:951.4px;font-size:23.5px;line-height:23.5px;color:#c6c5d5;font-weight:400;">0 ops/s</div>
<div class="t" style="left:2280.0px;width:1500px;text-align:right;top:951.4px;font-size:23.5px;line-height:23.5px;color:#c6c5d5;font-weight:400;">0 ops/s</div>
<div class="a" style="left:3217px;top:1001.6px;width:25px;height:7px;border-radius:3.5px;background:#ea4655"></div>
<div class="t" style="left:3256.6px;top:993.5px;font-size:23.5px;line-height:23.5px;color:#c6c5d5;font-weight:400;">increment</div>
<div class="t" style="left:1966.0px;width:1500px;text-align:right;top:993.5px;font-size:23.5px;line-height:23.5px;color:#c6c5d5;font-weight:400;">0 ops/s</div>
<div class="t" style="left:2133.5px;width:1500px;text-align:right;top:993.5px;font-size:23.5px;line-height:23.5px;color:#c6c5d5;font-weight:400;">0 ops/s</div>
<div class="t" style="left:2280.0px;width:1500px;text-align:right;top:993.5px;font-size:23.5px;line-height:23.5px;color:#c6c5d5;font-weight:400;">0 ops/s</div>
<div class="t" style="left:44.4px;top:1265.3px;font-size:27px;line-height:27px;color:#c6c5d5;font-weight:400;letter-spacing:0.42px;-webkit-text-stroke:1px #c6c5d5">Cache hit percentage</div>
<svg class="a" style="left:336.5px;top:1262.4px" width="30" height="30" viewBox="0 0 30 30"><circle cx="15" cy="15" r="10.9" fill="none" stroke="#8b8b97" stroke-width="2.4"/><circle cx="15" cy="11.2" r="1.6" fill="#8b8b97"/><rect x="13.75" y="14.4" width="2.5" height="5.8" rx="0.6" fill="#8b8b97"/></svg>
<svg class="a" style="left:0;top:0" width="3840" height="1810"><line x1="116.5" y1="1336.5" x2="1882.4" y2="1336.5" stroke="#2b2e31" stroke-width="1"/><line x1="116.5" y1="1406.5" x2="1882.4" y2="1406.5" stroke="#2b2e31" stroke-width="1"/><line x1="116.5" y1="1476.5" x2="1882.4" y2="1476.5" stroke="#2b2e31" stroke-width="1"/><line x1="116.5" y1="1545.5" x2="1882.4" y2="1545.5" stroke="#2b2e31" stroke-width="1"/><line x1="116.5" y1="1615.5" x2="1882.4" y2="1615.5" stroke="#2b2e31" stroke-width="1"/><line x1="116.5" y1="1685.5" x2="1882.4" y2="1685.5" stroke="#2b2e31" stroke-width="1"/><line x1="116.5" y1="1336.3" x2="116.5" y2="1691.7" stroke="#2b2e31" stroke-width="1"/><line x1="421.5" y1="1336.3" x2="421.5" y2="1691.7" stroke="#2b2e31" stroke-width="1"/><line x1="725.5" y1="1336.3" x2="725.5" y2="1691.7" stroke="#2b2e31" stroke-width="1"/><line x1="1030.5" y1="1336.3" x2="1030.5" y2="1691.7" stroke="#2b2e31" stroke-width="1"/><line x1="1335.5" y1="1336.3" x2="1335.5" y2="1691.7" stroke="#2b2e31" stroke-width="1"/><line x1="1639.5" y1="1336.3" x2="1639.5" y2="1691.7" stroke="#2b2e31" stroke-width="1"/><path d="M116.50,1338.22C157.12,1338.22 197.74,1338.22 238.36,1338.22C278.98,1338.22 319.60,1338.22 360.22,1338.22C400.84,1338.22 441.46,1338.22 482.08,1338.22C522.70,1338.22 563.32,1338.22 603.94,1338.22C644.56,1338.22 685.18,1338.22 725.80,1338.22C766.42,1338.22 807.04,1338.22 847.66,1338.22C888.28,1338.22 928.90,1338.22 969.52,1338.22C1010.14,1338.22 1050.76,1338.22 1091.38,1338.22C1132.00,1338.22 1172.62,1338.22 1213.24,1338.22C1253.86,1338.22 1294.48,1338.22 1335.10,1338.22C1375.72,1338.22 1416.34,1338.22 1456.96,1338.22C1497.58,1338.22 1538.20,1338.22 1578.82,1338.22C1619.44,1338.22 1660.06,1338.22 1700.68,1338.22C1741.30,1338.22 1781.92,1338.22 1822.54,1338.22L1822.54,1685.70L116.50,1685.70Z" fill="rgba(108,182,102,0.31)" stroke="none"/><path d="M116.50,1338.22C157.12,1338.22 197.74,1338.22 238.36,1338.22C278.98,1338.22 319.60,1338.22 360.22,1338.22C400.84,1338.22 441.46,1338.22 482.08,1338.22C522.70,1338.22 563.32,1338.22 603.94,1338.22C644.56,1338.22 685.18,1338.22 725.80,1338.22C766.42,1338.22 807.04,1338.22 847.66,1338.22C888.28,1338.22 928.90,1338.22 969.52,1338.22C1010.14,1338.22 1050.76,1338.22 1091.38,1338.22C1132.00,1338.22 1172.62,1338.22 1213.24,1338.22C1253.86,1338.22 1294.48,1338.22 1335.10,1338.22C1375.72,1338.22 1416.34,1338.22 1456.96,1338.22C1497.58,1338.22 1538.20,1338.22 1578.82,1338.22C1619.44,1338.22 1660.06,1338.22 1700.68,1338.22C1741.30,1338.22 1781.92,1338.22 1822.54,1338.22" fill="none" stroke="#6cb666" stroke-width="4" stroke-linejoin="round" stroke-linecap="butt"/></svg>
<div class="t" style="left:-1394.5px;width:1500px;text-align:right;top:1324.5px;font-size:23.5px;line-height:23.5px;color:#c6c5d5;font-weight:400;">100%</div>
<div class="t" style="left:-1394.5px;width:1500px;text-align:right;top:1394.4px;font-size:23.5px;line-height:23.5px;color:#c6c5d5;font-weight:400;">80%</div>
<div class="t" style="left:-1394.5px;width:1500px;text-align:right;top:1464.3px;font-size:23.5px;line-height:23.5px;color:#c6c5d5;font-weight:400;">60%</div>
<div class="t" style="left:-1394.5px;width:1500px;text-align:right;top:1534.2px;font-size:23.5px;line-height:23.5px;color:#c6c5d5;font-weight:400;">40%</div>
<div class="t" style="left:-1394.5px;width:1500px;text-align:right;top:1604.0px;font-size:23.5px;line-height:23.5px;color:#c6c5d5;font-weight:400;">20%</div>
<div class="t" style="left:-1394.5px;width:1500px;text-align:right;top:1673.9px;font-size:23.5px;line-height:23.5px;color:#c6c5d5;font-weight:400;">0%</div>
<div class="t" style="left:-633.5px;width:1500px;text-align:center;top:1700.2px;font-size:23.3px;line-height:23.3px;color:#c6c5d5;font-weight:400;">11:30</div>
<div class="t" style="left:-328.9px;width:1500px;text-align:center;top:1700.2px;font-size:23.3px;line-height:23.3px;color:#c6c5d5;font-weight:400;">11:35</div>
<div class="t" style="left:-24.2px;width:1500px;text-align:center;top:1700.2px;font-size:23.3px;line-height:23.3px;color:#c6c5d5;font-weight:400;">11:40</div>
<div class="t" style="left:280.5px;width:1500px;text-align:center;top:1700.2px;font-size:23.3px;line-height:23.3px;color:#c6c5d5;font-weight:400;">11:45</div>
<div class="t" style="left:585.1px;width:1500px;text-align:center;top:1700.2px;font-size:23.3px;line-height:23.3px;color:#c6c5d5;font-weight:400;">11:50</div>
<div class="t" style="left:889.8px;width:1500px;text-align:center;top:1700.2px;font-size:23.3px;line-height:23.3px;color:#c6c5d5;font-weight:400;">11:55</div>
<div class="a" style="left:51px;top:1744.1px;width:26px;height:7px;border-radius:3.5px;background:#6cb666"></div>
<div class="t" style="left:91.0px;top:1735.7px;font-size:23.7px;line-height:23.7px;color:#c6c5d5;font-weight:400;">localhost:16030</div>
<div class="t" style="left:1943.4px;top:1265.3px;font-size:27px;line-height:27px;color:#c6c5d5;font-weight:400;letter-spacing:0.42px;-webkit-text-stroke:1px #c6c5d5">Authentications</div>
<svg class="a" style="left:2166.5px;top:1262.2px" width="30" height="30" viewBox="0 0 30 30"><circle cx="15" cy="15" r="10.9" fill="none" stroke="#8b8b97" stroke-width="2.4"/><circle cx="15" cy="11.2" r="1.6" fill="#8b8b97"/><rect x="13.75" y="14.4" width="2.5" height="5.8" rx="0.6" fill="#8b8b97"/></svg>
<svg class="a" style="left:0;top:0" width="3840" height="1810"><line x1="2057.4" y1="1336.5" x2="3280.8" y2="1336.5" stroke="#2b2e31" stroke-width="1"/><line x1="2057.4" y1="1414.5" x2="3280.8" y2="1414.5" stroke="#2b2e31" stroke-width="1"/><line x1="2057.4" y1="1492.5" x2="3280.8" y2="1492.5" stroke="#2b2e31" stroke-width="1"/><line x1="2057.4" y1="1570.5" x2="3280.8" y2="1570.5" stroke="#2b2e31" stroke-width="1"/><line x1="2057.4" y1="1648.5" x2="3280.8" y2="1648.5" stroke="#2b2e31" stroke-width="1"/><line x1="2057.4" y1="1726.5" x2="3280.8" y2="1726.5" stroke="#2b2e31" stroke-width="1"/><line x1="2057.5" y1="1336.3" x2="2057.5" y2="1732.4" stroke="#2b2e31" stroke-width="1"/><line x1="2268.5" y1="1336.3" x2="2268.5" y2="1732.4" stroke="#2b2e31" stroke-width="1"/><line x1="2479.5" y1="1336.3" x2="2479.5" y2="1732.4" stroke="#2b2e31" stroke-width="1"/><line x1="2689.5" y1="1336.3" x2="2689.5" y2="1732.4" stroke="#2b2e31" stroke-width="1"/><line x1="2900.5" y1="1336.3" x2="2900.5" y2="1732.4" stroke="#2b2e31" stroke-width="1"/><line x1="3111.5" y1="1336.3" x2="3111.5" y2="1732.4" stroke="#2b2e31" stroke-width="1"/><path d="M2057.40,1726.40C2085.51,1726.40 2113.61,1726.40 2141.72,1726.40C2169.83,1726.40 2197.93,1726.40 2226.04,1726.40C2254.15,1726.40 2282.25,1726.40 2310.36,1726.40C2338.47,1726.40 2366.57,1726.40 2394.68,1726.40C2422.79,1726.40 2450.89,1726.40 2479.00,1726.40C2507.11,1726.40 2535.21,1726.40 2563.32,1726.40C2591.43,1726.40 2619.53,1726.40 2647.64,1726.40C2675.75,1726.40 2703.85,1726.40 2731.96,1726.40C2760.07,1726.40 2788.17,1726.40 2816.28,1726.40C2844.39,1726.40 2872.49,1726.40 2900.60,1726.40C2928.71,1726.40 2956.81,1726.40 2984.92,1726.40C3013.03,1726.40 3041.13,1726.40 3069.24,1726.40C3097.35,1726.40 3125.45,1726.40 3153.56,1726.40C3181.67,1726.40 3209.77,1726.40 3237.88,1726.40" fill="none" stroke="#6cb666" stroke-width="4" stroke-linejoin="round" stroke-linecap="butt"/><path d="M2057.40,1726.40C2085.51,1726.40 2113.61,1726.40 2141.72,1726.40C2169.83,1726.40 2197.93,1726.40 2226.04,1726.40C2254.15,1726.40 2282.25,1726.40 2310.36,1726.40C2338.47,1726.40 2366.57,1726.40 2394.68,1726.40C2422.79,1726.40 2450.89,1726.40 2479.00,1726.40C2507.11,1726.40 2535.21,1726.40 2563.32,1726.40C2591.43,1726.40 2619.53,1726.40 2647.64,1726.40C2675.75,1726.40 2703.85,1726.40 2731.96,1726.40C2760.07,1726.40 2788.17,1726.40 2816.28,1726.40C2844.39,1726.40 2872.49,1726.40 2900.60,1726.40C2928.71,1726.40 2956.81,1726.40 2984.92,1726.40C3013.03,1726.40 3041.13,1726.40 3069.24,1726.40C3097.35,1726.40 3125.45,1726.40 3153.56,1726.40C3181.67,1726.40 3209.77,1726.40 3237.88,1726.40" fill="none" stroke="#eec536" stroke-width="4" stroke-linejoin="round" stroke-linecap="butt"/></svg>
<div class="t" style="left:546.5px;width:1500px;text-align:right;top:1324.6px;font-size:23.5px;line-height:23.5px;color:#c6c5d5;font-weight:400;">100 req/s</div>
<div class="t" style="left:546.5px;width:1500px;text-align:right;top:1402.6px;font-size:23.5px;line-height:23.5px;color:#c6c5d5;font-weight:400;">80 req/s</div>
<div class="t" style="left:546.5px;width:1500px;text-align:right;top:1480.6px;font-size:23.5px;line-height:23.5px;color:#c6c5d5;font-weight:400;">60 req/s</div>
<div class="t" style="left:546.5px;width:1500px;text-align:right;top:1558.6px;font-size:23.5px;line-height:23.5px;color:#c6c5d5;font-weight:400;">40 req/s</div>
<div class="t" style="left:546.5px;width:1500px;text-align:right;top:1636.6px;font-size:23.5px;line-height:23.5px;color:#c6c5d5;font-weight:400;">20 req/s</div>
<div class="t" style="left:546.5px;width:1500px;text-align:right;top:1714.6px;font-size:23.5px;line-height:23.5px;color:#c6c5d5;font-weight:400;">0 req/s</div>
<div class="t" style="left:1307.4px;width:1500px;text-align:center;top:1741.0px;font-size:23.3px;line-height:23.3px;color:#c6c5d5;font-weight:400;">11:30</div>
<div class="t" style="left:1518.2px;width:1500px;text-align:center;top:1741.0px;font-size:23.3px;line-height:23.3px;color:#c6c5d5;font-weight:400;">11:35</div>
<div class="t" style="left:1729.0px;width:1500px;text-align:center;top:1741.0px;font-size:23.3px;line-height:23.3px;color:#c6c5d5;font-weight:400;">11:40</div>
<div class="t" style="left:1939.8px;width:1500px;text-align:center;top:1741.0px;font-size:23.3px;line-height:23.3px;color:#c6c5d5;font-weight:400;">11:45</div>
<div class="t" style="left:2150.6px;width:1500px;text-align:center;top:1741.0px;font-size:23.3px;line-height:23.3px;color:#c6c5d5;font-weight:400;">11:50</div>
<div class="t" style="left:2361.4px;width:1500px;text-align:center;top:1741.0px;font-size:23.3px;line-height:23.3px;color:#c6c5d5;font-weight:400;">11:55</div>
<div class="t" style="left:3350.4px;top:1330.2px;font-size:22.8px;line-height:22.8px;color:#6896fa;font-weight:400;-webkit-text-stroke:0.8px #6896fa">Name</div>
<div class="t" style="left:2041.0px;width:1500px;text-align:right;top:1330.2px;font-size:22.8px;line-height:22.8px;color:#6896fa;font-weight:400;-webkit-text-stroke:0.8px #6896fa">Min</div>
<div class="t" style="left:2168.0px;width:1500px;text-align:right;top:1330.2px;font-size:22.8px;line-height:22.8px;color:#6896fa;font-weight:400;-webkit-text-stroke:0.8px #6896fa">Mean</div>
<div class="t" style="left:2280.3px;width:1500px;text-align:right;top:1330.2px;font-size:22.8px;line-height:22.8px;color:#6896fa;font-weight:400;-webkit-text-stroke:0.8px #6896fa">Max</div>
<svg class="a" style="left:0;top:0" width="3840" height="1810"><line x1="3295.6" y1="1362.5" x2="3795" y2="1362.5" stroke="#2b2e31" stroke-width="1"/><line x1="3295.6" y1="1404.5" x2="3795" y2="1404.5" stroke="#2b2e31" stroke-width="1"/><line x1="3295.6" y1="1446.5" x2="3795" y2="1446.5" stroke="#2b2e31" stroke-width="1"/></svg>
<div class="a" style="left:3311px;top:1380.1px;width:25px;height:7px;border-radius:3.5px;background:#6cb666"></div>
<div class="t" style="left:3350.4px;top:1372.0px;font-size:23.5px;line-height:23.5px;color:#c6c5d5;font-weight:400;">success</div>
<div class="t" style="left:2041.0px;width:1500px;text-align:right;top:1372.0px;font-size:23.5px;line-height:23.5px;color:#c6c5d5;font-weight:400;">0 req/s</div>
<div class="t" style="left:2168.0px;width:1500px;text-align:right;top:1372.0px;font-size:23.5px;line-height:23.5px;color:#c6c5d5;font-weight:400;">0 req/s</div>
<div class="t" style="left:2280.3px;width:1500px;text-align:right;top:1372.0px;font-size:23.5px;line-height:23.5px;color:#c6c5d5;font-weight:400;">0 req/s</div>
<div class="a" style="left:3311px;top:1421.7px;width:25px;height:7px;border-radius:3.5px;background:#eec536"></div>
<div class="t" style="left:3350.4px;top:1413.6px;font-size:23.5px;line-height:23.5px;color:#c6c5d5;font-weight:400;">failure</div>
<div class="t" style="left:2041.0px;width:1500px;text-align:right;top:1413.6px;font-size:23.5px;line-height:23.5px;color:#c6c5d5;font-weight:400;">0 req/s</div>
<div class="t" style="left:2168.0px;width:1500px;text-align:right;top:1413.6px;font-size:23.5px;line-height:23.5px;color:#c6c5d5;font-weight:400;">0 req/s</div>
<div class="t" style="left:2280.3px;width:1500px;text-align:right;top:1413.6px;font-size:23.5px;line-height:23.5px;color:#c6c5d5;font-weight:400;">0 req/s</div>
<div class="a" style="left:2px;top:79px;width:3836px;height:12px;background:linear-gradient(rgba(0,0,0,0.97) 0px, rgba(0,0,0,0.9) 1.5px, rgba(0,0,0,0.45) 3px, rgba(0,0,0,0.2) 6px, rgba(0,0,0,0.05) 9px, rgba(0,0,0,0) 12px)"></div>
<div class="a" style="left:2px;top:0;width:3836px;height:78px;background:#181b1e;border-bottom:1px solid #2d2f33"></div>
<div class="a" style="left:2px;top:5px;width:3836px;height:1px;background:#2b2e33"></div>
<svg class="a" style="left:30px;top:28px" width="42" height="28" viewBox="0 0 42 28"><g stroke="#c6c5d5" stroke-width="3.2" stroke-linecap="round"><line x1="4.5" y1="4.3" x2="37" y2="4.3"/><line x1="4.5" y1="13.5" x2="37" y2="13.5"/><line x1="4.5" y1="23" x2="37" y2="23"/></g></svg>
<div class="t" style="left:100.0px;top:27.0px;font-size:27.5px;line-height:27.5px;color:#c6c5d5;font-weight:400;-webkit-text-stroke:0.35px #c6c5d5">Home</div>
<div class="t" style="left:215.0px;top:27.0px;font-size:27.5px;line-height:27.5px;color:#c6c5d5;font-weight:400;-webkit-text-stroke:0.35px #c6c5d5">Dashboards</div>
<div class="t" style="left:404.0px;top:27.0px;font-size:27.5px;line-height:27.5px;color:#c6c5d5;font-weight:400;-webkit-text-stroke:0.35px #c6c5d5">Integration - Apache HBase</div>
<div class="t" style="left:783.5px;top:27.5px;font-size:26.9px;line-height:26.9px;color:#8b8b97;font-weight:400;">Apache HBase RegionServer overview</div>
<svg class="a" style="left:187.4px;top:34.4px" width="12.3" height="17.8"><polyline points="3,3 9.3,8.9 3,14.8" fill="none" stroke="#8b8b97" stroke-width="2.4" stroke-linecap="round" stroke-linejoin="round"/></svg>
<svg class="a" style="left:376.2px;top:34.4px" width="12.3" height="17.8"><polyline points="3,3 9.3,8.9 3,14.8" fill="none" stroke="#8b8b97" stroke-width="2.4" stroke-linecap="round" stroke-linejoin="round"/></svg>
<svg class="a" style="left:756.4px;top:34.4px" width="12.3" height="17.8"><polyline points="3,3 9.3,8.9 3,14.8" fill="none" stroke="#8b8b97" stroke-width="2.4" stroke-linecap="round" stroke-linejoin="round"/></svg>
<svg class="a" style="left:1278px;top:26px" width="34" height="34" viewBox="0 0 34 34"><polygon points="16.3,4 20,12.3 29,13.2 22.2,19.3 24.2,28.3 16.3,23.6 8.4,28.3 10.4,19.3 3.6,13.2 12.6,12.3" fill="none" stroke="#c6c5d5" stroke-width="2.4" stroke-linejoin="round"/></svg>
<svg class="a" style="left:1338px;top:25px" width="36" height="36" viewBox="0 0 36 36"><g fill="none" stroke="#c6c5d5" stroke-width="2.4"><circle cx="25.2" cy="8.5" r="4.5"/><circle cx="9" cy="17" r="4.5"/><circle cx="25.2" cy="25.5" r="4.5"/><line x1="13" y1="14.8" x2="21.2" y2="10.6"/><line x1="13" y1="19.2" x2="21.2" y2="23.4"/></g></svg>
<svg class="a" style="left:0;top:0" width="3840" height="80"><rect x="2399.8" y="39.8" width="4.9" height="11.4" rx="0.9" fill="#6896fa"/><rect x="2406.0" y="36.3" width="4.9" height="14.9" rx="0.9" fill="#6896fa"/><rect x="2411.7" y="42.0" width="4.9" height="9.2" rx="0.9" fill="#6896fa"/><rect x="2417.2" y="33.6" width="4.8" height="17.6" rx="0.9" fill="#6896fa"/><g stroke="#181b1e" stroke-width="7" stroke-linecap="butt"><line x1="2426.3" y1="35" x2="2426.3" y2="49"/><line x1="2419.4" y1="42" x2="2433.2" y2="42"/></g><defs><linearGradient id="og" x1="0" y1="0" x2="0" y2="1"><stop offset="0" stop-color="#f2793a"/><stop offset="1" stop-color="#fbb13c"/></linearGradient></defs><path d="M2424.4,36 H2428.2 V40.1 H2432.2 V43.9 H2428.2 V48 H2424.4 V43.9 H2420.4 V40.1 H2424.4 Z" fill="url(#og)"/><polyline points="2502.4,39.3 2508.1,45 2513.8,39.3" fill="none" stroke="#6896fa" stroke-width="3" stroke-linecap="round" stroke-linejoin="round"/><path d="M2569.8,31.5 H2581.2 L2588.6,38.9 V50.7 Q2588.6,52.9 2586.4,52.9 H2569.8 Q2567.6,52.9 2567.6,50.7 V33.7 Q2567.6,31.5 2569.8,31.5 Z" fill="none" stroke="#8b8b97" stroke-width="2.8" stroke-linecap="round" stroke-linejoin="round"/><path d="M2573,31.5 V36.3 H2579.8 V31.5" fill="none" stroke="#8b8b97" stroke-width="2.8" stroke-linecap="round" stroke-linejoin="round"/><path d="M2573,52.9 V46.8 Q2573,44.6 2575.2,44.6 H2581.4 Q2583.6,44.6 2583.6,46.8 V52.9" fill="none" stroke="#8b8b97" stroke-width="2.8" stroke-linecap="round" stroke-linejoin="round"/><circle cx="2656.3" cy="42.1" r="12.2" fill="none" stroke="#8b8b97" stroke-width="2.8" stroke-linecap="round" stroke-linejoin="round"/><circle cx="2656.3" cy="37.4" r="1.7" fill="#8b8b97"/><line x1="2656.3" y1="42.2" x2="2656.3" y2="47.6" fill="none" stroke="#8b8b97" stroke-width="2.8" stroke-linecap="round" stroke-linejoin="round"/><polygon points="2730.72,33.45 2731.19,30.07 2735.21,30.07 2735.68,33.45 2737.56,34.23 2740.28,32.17 2743.13,35.02 2741.07,37.74 2741.85,39.62 2745.23,40.09 2745.23,44.11 2741.85,44.58 2741.07,46.46 2743.13,49.18 2740.28,52.03 2737.56,49.97 2735.68,50.75 2735.21,54.13 2731.19,54.13 2730.72,50.75 2728.84,49.97 2726.12,52.03 2723.27,49.18 2725.33,46.46 2724.55,44.58 2721.17,44.11 2721.17,40.09 2724.55,39.62 2725.33,37.74 2723.27,35.02 2726.12,32.17 2728.84,34.23" fill="none" stroke="#8b8b97" stroke-width="2.8" stroke-linecap="round" stroke-linejoin="round"/><circle cx="2733.2" cy="42.1" r="4.2" fill="none" stroke="#8b8b97" stroke-width="2.8" stroke-linecap="round" stroke-linejoin="round"/><polyline points="2806.2,36 2800,42.2 2806.2,48.4" fill="none" stroke="#8b8b97" stroke-width="2.8" stroke-linecap="round" stroke-linejoin="round"/><circle cx="2858" cy="42.3" r="12.1" fill="none" stroke="#8b8b97" stroke-width="2.8" stroke-linecap="round" stroke-linejoin="round"/><polyline points="2858.2,35 2858.2,42.3 2853.4,42.3" fill="none" stroke="#8b8b97" stroke-width="2.8" stroke-linecap="round" stroke-linejoin="round"/><polyline points="3468.8,39.5 3474.3,45 3479.8,39.5" fill="none" stroke="#8b8b97" stroke-width="2.8" stroke-linecap="round" stroke-linejoin="round"/><polyline points="3524.1,36 3530.3,42.2 3524.1,48.4" fill="none" stroke="#8b8b97" stroke-width="2.8" stroke-linecap="round" stroke-linejoin="round"/><circle cx="3580.9" cy="40.9" r="10.5" fill="none" stroke="#8b8b97" stroke-width="2.8" stroke-linecap="round" stroke-linejoin="round"/><line x1="3575.4" y1="40.9" x2="3586.6" y2="40.9" fill="none" stroke="#8b8b97" stroke-width="2.8" stroke-linecap="round" stroke-linejoin="round"/><line x1="3588.6" y1="48.7" x2="3594.4" y2="54.5" fill="none" stroke="#8b8b97" stroke-width="2.8" stroke-linecap="round" stroke-linejoin="round"/><path d="M3650.0,35.8 A12,12 0 0 1 3672.3,41.6" fill="none" stroke="#8b8b97" stroke-width="2.8" stroke-linecap="round" stroke-linejoin="round"/><path d="M3648.3,42.6 A12,12 0 0 0 3670.4,48.5" fill="none" stroke="#8b8b97" stroke-width="2.8" stroke-linecap="round" stroke-linejoin="round"/><polyline points="3649.0,29.6 3649.0,36.2 3656.4,36.2" fill="none" stroke="#8b8b97" stroke-width="3" stroke-linecap="round" stroke-linejoin="miter"/><polyline points="3664.0,48.4 3670.6,48.4 3670.6,55.2" fill="none" stroke="#8b8b97" stroke-width="3" stroke-linecap="round" stroke-linejoin="miter"/><polyline points="3714.8,39.5 3720.3,45 3725.8,39.5" fill="none" stroke="#8b8b97" stroke-width="2.8" stroke-linecap="round" stroke-linejoin="round"/><rect x="3757" y="20" width="1.5" height="44" fill="#34363b"/><polyline points="3787.3,48 3795.3,40 3803.3,48" fill="none" stroke="#8b8b97" stroke-width="3.6" stroke-linecap="round" stroke-linejoin="round"/></svg>
<div class="t" style="left:2442.2px;top:28.7px;font-size:26.2px;line-height:26.2px;color:#6896fa;font-weight:400;letter-spacing:1px;-webkit-text-stroke:0.85px #6896fa">Add</div>
<div class="t" style="left:2890.0px;top:27.4px;font-size:27.3px;line-height:27.3px;color:#8b8b97;font-weight:400;letter-spacing:0.28px;-webkit-text-stroke:0.9px #8b8b97">2023-10-18 11:30:00 to 2023-10-18 11:58:59</div>
</body></html>
